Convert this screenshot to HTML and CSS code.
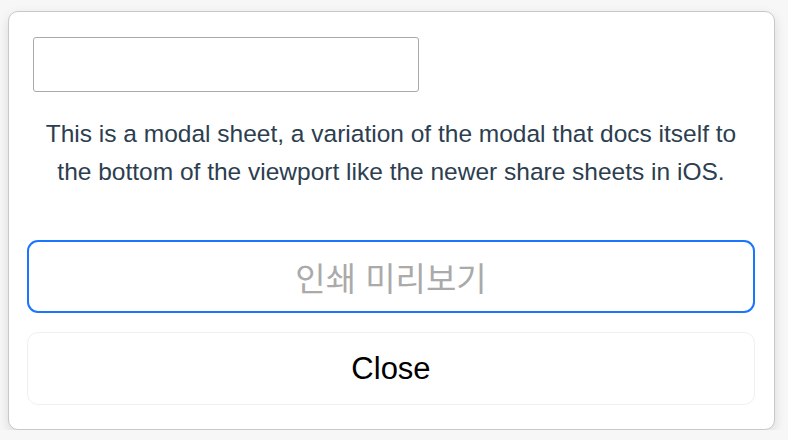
FILE: index.html
```html
<!DOCTYPE html>
<html lang="en">
<head>
<meta charset="UTF-8">
<meta name="viewport" content="width=device-width, initial-scale=1.0">
<title>Modal Sheet</title>
<link rel="stylesheet" href="styles.css">
</head>
<body>
<div class="sheet">
  <input type="text" class="field">
  <p class="desc">This is a modal sheet, a variation of the modal that docs itself to the bottom of the viewport like the newer share sheets in iOS.</p>
  <div class="actions">
    <button type="button" class="btn btn-primary">인쇄 미리보기</button>
    <button type="button" class="btn btn-close">Close</button>
  </div>
</div>
</body>
</html>
```

FILE: styles.css
```css
html, body {
  margin: 0;
  padding: 0;
  background: #f7f7f7;
  font-family: "Liberation Sans", Arial, "Noto Sans CJK KR", sans-serif;
}
.sheet {
  box-sizing: border-box;
  width: 767px;
  height: 419px;
  margin: 11px 0 0 8px;
  padding: 25px 19px 0 18px;
  background: #fff;
  border: 1px solid #c8c8c8;
  border-radius: 10px;
  box-shadow: 0 4px 12px rgba(0, 0, 0, 0.12);
}
.field {
  display: block;
  box-sizing: border-box;
  width: 386px;
  height: 55px;
  margin: 0 0 0 6px;
  border: 1px solid #a9a9a9;
  border-radius: 3px;
  background: #fff;
}
.desc {
  margin: 23px 0 0;
  padding: 0 6px;
  font-size: 24.5px;
  line-height: 38px;
  text-align: center;
  color: #2c3e50;
}
.actions {
  display: flex;
  flex-direction: column;
  gap: 19px;
  margin-top: 49px;
}
.btn {
  box-sizing: border-box;
  height: 73px;
  width: 100%;
  background: #fff;
  border-radius: 11px;
  font-family: "Liberation Sans", Arial, "Noto Sans CJK KR", sans-serif;
  cursor: pointer;
}
.btn-primary {
  border: 2px solid #1a75ff;
  color: #aaa;
  font-size: 33px;
}
.btn-close {
  border: 1px solid #f0f0f0;
  color: #000;
  font-size: 31px;
}
```
